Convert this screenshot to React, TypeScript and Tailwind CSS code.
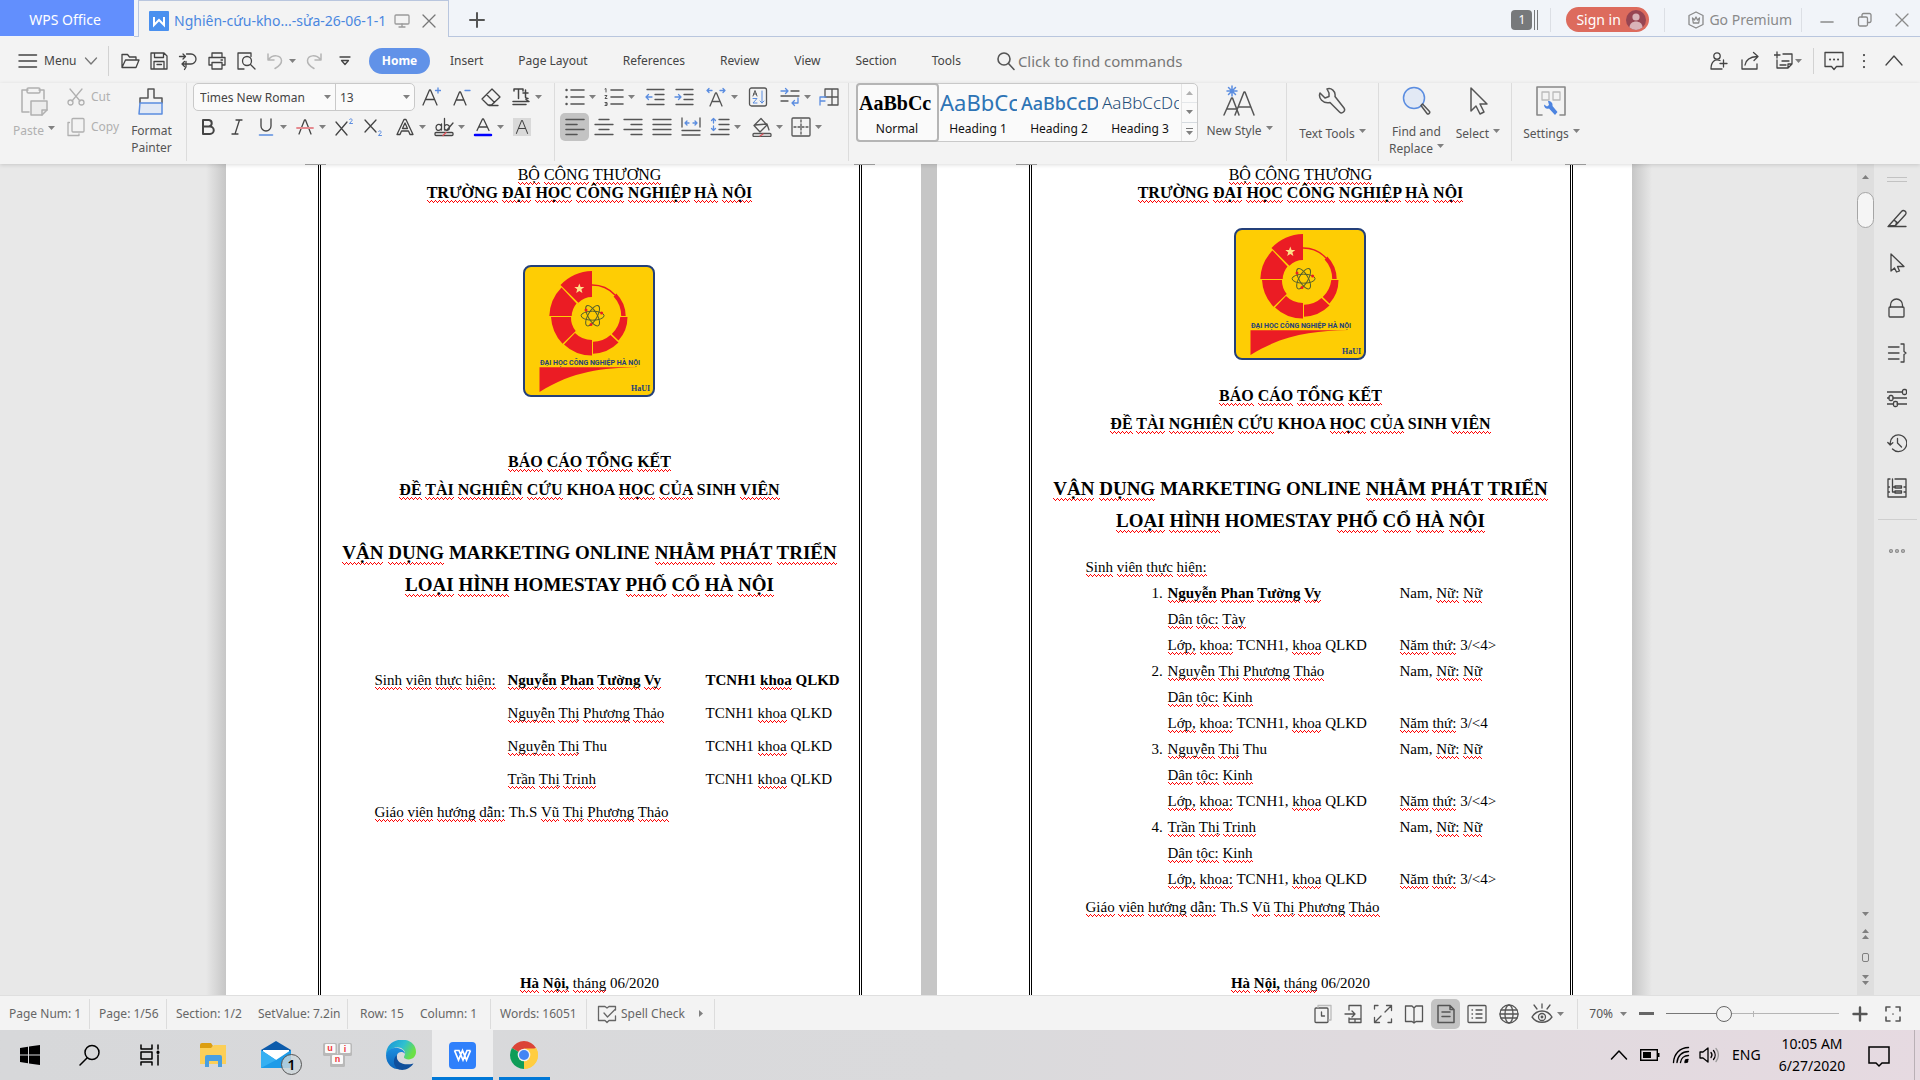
import React from "react";

type Kids = { children?: React.ReactNode };

/* ---------- drawing helpers ---------- */

function Svg({ s = 20, vb = 20, sw = 1.3, children }: Kids & { s?: number; vb?: number; sw?: number }) {
  return (
    <svg width={s} height={s} viewBox={`0 0 ${vb} ${vb}`} fill="none" stroke="currentColor" strokeWidth={sw} strokeLinecap="round" strokeLinejoin="round" className="shrink-0" aria-hidden="true">
      {children}
    </svg>
  );
}

function Caret() {
  return (
    <svg width="7" height="4" viewBox="0 0 7 4" className="shrink-0 fill-[#808080]" aria-hidden="true">
      <path d="M0 0h7L3.500 4z" />
    </svg>
  );
}

function Tool({ label, children }: Kids & { label: string }) {
  return (
    <button type="button" aria-label={label} className="flex h-7 w-[29px] shrink-0 items-center justify-center">
      {children}
    </button>
  );
}

function DropTool({ label, children }: Kids & { label: string }) {
  return (
    <button type="button" aria-label={label} className="flex h-7 w-[39px] shrink-0 items-center">
      <span className="flex w-[29px] justify-center">{children}</span>
      <Caret />
    </button>
  );
}

function Big({ label, second, drop, high, children }: Kids & { label: string; second?: string; drop?: boolean; high?: boolean }) {
  return (
    <button type="button" className="flex flex-col items-center">
      <span className="flex h-9 items-center">{children}</span>
      <span className={high ? "mt-[3px] flex gap-1 leading-[17px]" : second ? "mt-1 flex gap-1 leading-[17px]" : "mt-[6px] flex gap-1 leading-[18px]"}>
        {label}
        {drop && !second && <span className="pt-1"><Caret /></span>}
      </span>
      {second && (
        <span className="flex gap-1 leading-[17px]">
          {second}
          {drop && <span className="pt-1"><Caret /></span>}
        </span>
      )}
    </button>
  );
}

const Sep = () => <div className="mx-[5px] h-[78px] w-px shrink-0 bg-[#dcdcdc]" />;

/* ---------- title bar ---------- */

function TitleBar() {
  return (
    <header className="flex h-[37px] shrink-0 items-stretch bg-[#f1f4f9] text-sm">
      <button type="button" className="mb-px w-[134px] bg-[#628ffd] pt-1 pr-1 text-white">WPS Office</button>
      <div className="w-1 border-b border-[#b9c6de]" />
      <div className="flex w-[311px] items-center border-x border-t border-[#b9c6de] bg-[#f3f3f3] pt-[3px] pl-[10px] text-[#4a87e0]">
        <svg width="20" height="20" viewBox="0 0 20 20" className="shrink-0" aria-hidden="true">
          <rect width="20" height="20" rx="1" fill="#4a90ef" />
          <path d="M5 6v8l5-5 5 5V6" fill="none" stroke="#fff" strokeWidth="2" />
        </svg>
        <span className="ml-[5px] w-[220px] whitespace-nowrap">Nghiên-cứu-kho...-sửa-26-06-1-1</span>
        <span className="text-[#9a9a9a]"><Svg s={16} vb={16}><rect x="1" y="2" width="14" height="9" rx="1" /><path d="M8 11v3M5 14h6" /></Svg></span>
        <button type="button" aria-label="Close tab" className="ml-3 text-[#777]"><Svg s={14} vb={14}><path d="M1 1l12 12M13 1L1 13" /></Svg></button>
      </div>
      <div className="flex flex-1 items-center border-b border-[#b9c6de] pt-[3px] text-[#8a8a8a]">
        <button type="button" aria-label="New tab" className="ml-5 text-[#555]"><Svg s={16} vb={16} sw={2}><path d="M8 1v14M1 8h14" /></Svg></button>
        <div className="flex-1" />
        <div className="flex gap-[2px]">
          <span className="flex h-5 w-[21px] items-center justify-center rounded-sm bg-[#77797b] text-xs text-white">1</span>
          <span className="h-5 w-px bg-[#77797b]" />
          <span className="h-5 w-px bg-[#77797b]" />
        </div>
        <div className="mx-3 h-6 w-px bg-[#dcdfe5]" />
        <button type="button" className="ml-[3px] flex h-[25px] w-[83px] items-center justify-between rounded-full bg-[#dd6b5d] pr-[3px] pl-[10px] text-white">
          Sign in
          <svg width="20" height="20" viewBox="0 0 20 20" aria-hidden="true">
            <circle cx="10" cy="10" r="10" fill="#974552" />
            <circle cx="10" cy="7" r="3.600" fill="#d9b3b8" />
            <path d="M3.500 17.500c0-8 13-8 13 0a10 10 0 0 1-13 0" fill="#d9b3b8" />
          </svg>
        </button>
        <div className="mr-[22px] ml-[15px] h-6 w-px bg-[#dcdfe5]" />
        <button type="button" className="flex items-center gap-1">
          <Svg s={18} vb={18}><path d="M9 1l7 3.500v9L9 17l-7-3.500v-9z" /><path d="M5.500 7l.8 5h5.400l.8-5L10.500 9 9 6 7.500 9z" /></Svg>
          Go Premium
        </button>
        <div className="mr-[18px] ml-[9px] h-6 w-px bg-[#dcdfe5]" />
        <button type="button" aria-label="Minimize" className="w-[14px]"><Svg s={14} vb={14} sw={1.600}><path d="M1 9h12" /></Svg></button>
        <button type="button" aria-label="Restore" className="ml-[23px]"><Svg s={16} vb={16}><rect x="1.500" y="5" width="9" height="9" rx="1.500" /><path d="M5 5V3a1.500 1.500 0 0 1 1.500-1.500h6A1.500 1.500 0 0 1 14 3v6a1.500 1.500 0 0 1-1.500 1.500h-2" /></Svg></button>
        <button type="button" aria-label="Close" className="mr-[11px] ml-[22px]"><Svg s={14} vb={14}><path d="M1 1l12 12M13 1L1 13" /></Svg></button>
      </div>
    </header>
  );
}

/* ---------- menu row ---------- */

const tabs = ["Insert", "Page Layout", "References", "Review", "View", "Section", "Tools"];

function MenuRow() {
  return (
    <nav className="flex h-[46px] shrink-0 items-center pt-px text-[#444]">
      <button type="button" className="flex items-center pl-[18px]">
        <Svg s={20} sw={1.500}><path d="M1 4h17.500M1 10h17.500M1 16h17.500" /></Svg>
        <span className="ml-[6px] w-10 text-left">Menu</span>
        <span className="text-[#777]"><Svg s={14} vb={14}><path d="M1.500 4L7 10l5.500-6" /></Svg></span>
      </button>
      <div className="mr-[6px] ml-[10px] h-[30px] w-px bg-[#d2d2d2]" />
      <Tool label="Open"><Svg><path d="M2 16V3.500h5.500l2 2.500H16v3M2 16.500l3.500-7.500H19l-3 7.500z" /></Svg></Tool>
      <Tool label="Save"><Svg><path d="M2 2h13l3 3v13H2zM5.500 2v4.500h9V2M5 18v-7.500h10V18M8 13.500h4.500" /></Svg></Tool>
      <Tool label="Export"><Svg><path d="M1.500 5.500H7M5 3l2.500 2.500L5 8M8.500 3H13a5 5 0 0 1 0 10H4M6.500 10.500L4 13l2.500 2.500M8 10.500V16l-1.500 2.500" /></Svg></Tool>
      <Tool label="Print"><Svg><path d="M5 6V2h10v4M5 14H2V6.500h16V14h-3M5 11.500h10V18H5zM14 9h1.500" /></Svg></Tool>
      <Tool label="Print preview"><Svg><path d="M8 18H2V2h13v3.500" /><circle cx="11" cy="10" r="4.500" /><path d="M14.500 13.500L19 18" /></Svg></Tool>
      <span className="flex text-[#b5b5b5]">
        <Tool label="Undo"><Svg sw={1.500}><path d="M3 3v6h6M3.500 8.500C8 3 16 4 16.500 9.500c.3 3.500-3 6-6.500 8" /></Svg></Tool>
      </span>
      <Caret />
      <span className="ml-[3px] flex text-[#b5b5b5]">
        <Tool label="Redo"><Svg sw={1.500}><path d="M17 3v6h-6M16.500 8.500C12 3 4 4 3.500 9.500c-.3 3.500 3 6 6.500 8" /></Svg></Tool>
      </span>
      <span className="mr-[10px] ml-[2px] flex"><Tool label="Customize"><Svg s={12} vb={12}><path d="M1 2h10M2.500 5.500L6 9.500l3.500-4z" /></Svg></Tool></span>
      <button type="button" className="h-[26px] w-[61px] rounded-full bg-[#6192e8] font-bold text-white">Home</button>
      <div className="ml-5 flex gap-[35px] pt-px">
        {tabs.map((t) => <button type="button" key={t}>{t}</button>)}
      </div>
      <label className="ml-[35px] flex items-center gap-[2px] text-[#555]">
        <Svg s={20} sw={1.600}><circle cx="8" cy="8" r="6" /><path d="M12.500 12.500L18 18.500" /></Svg>
        <input className="w-[200px] bg-transparent text-[15px] outline-none placeholder:text-[#777]" placeholder="Click to find commands" aria-label="Find commands" />
      </label>
      <div className="flex-1" />
      <div className="flex items-center">
        <button type="button" aria-label="Collaborate" className="mr-3"><Svg><circle cx="9" cy="5" r="3.200" /><path d="M12 9.500c-5-2-9 1-9 8.500h11M15.500 9v7M12 12.500h7" /></Svg></button>
        <button type="button" aria-label="Share" className="mr-[14px]"><Svg><path d="M2 9v9h15v-5M5 14c1-6 5-8 12-8.500M13.500 1.500L18 5.500 14 9.500" /></Svg></button>
        <button type="button" aria-label="Notes" className="mr-[11px] flex items-center gap-px"><Svg><path d="M9 3h9v10l-4 4H3v-8M3 1v6M0 4h6M8 10h7M6 14h6M18 13h-4v4" /></Svg><Caret /></button>
        <div className="h-[26px] w-px bg-[#d2d2d2]" />
        <button type="button" aria-label="Comments" className="ml-[10px]"><Svg><path d="M1 1.500h18v14h-6.500l-2.500 3-2.500-3H1z" /><path d="M6 8.500h.1M10 8.500h.1M14 8.500h.1" strokeWidth="2" /></Svg></button>
        <button type="button" aria-label="More" className="ml-[10px]"><Svg sw={2.200}><path d="M10 4v.1M10 10v.1M10 16v.1" /></Svg></button>
        <button type="button" aria-label="Collapse ribbon" className="mr-4 ml-[10px]"><Svg><path d="M2 14l8-9 8 9" /></Svg></button>
      </div>
    </nav>
  );
}

/* ---------- ribbon ---------- */

const BL = "#5b8de0";

function Clipboard() {
  return (
    <div className="flex pl-[10px]">
      <div className="flex w-[48px] justify-center text-[#b0b0b0]">
        <Big label="Paste" drop high>
          <Svg s={30} vb={30} sw={1.500}><path d="M9 4H3v22h7M20 4h5v9" /><rect x="8" y="2" width="13" height="5" rx="1.500" /><path d="M12 15h16v9l-5 5H12z" fill="#ececec" /><path d="M28 24h-5v5" /></Svg>
        </Big>
      </div>
      <div className="flex w-[66px] flex-col gap-[2px] pl-2 text-[#b0b0b0]">
        <button type="button" className="flex h-7 items-center gap-[5px]"><Svg><path d="M4 2l10 12M16 2L6 14" /><circle cx="4.500" cy="15.500" r="2.500" /><circle cx="15.500" cy="15.500" r="2.500" /></Svg>Cut</button>
        <button type="button" className="flex h-7 items-center gap-[5px]"><Svg><rect x="6" y="1.500" width="12" height="13.500" rx="1" /><path d="M3.500 5.500H2v13h11V17" /></Svg>Copy</button>
      </div>
      <div className="flex w-[57px] justify-center pr-[2px] text-[#555]">
        <Big label="Format" second="Painter" high>
          <Svg s={30} vb={30} sw={1.500}><path d="M4 17v-5h8V3h6v9h8v5" /><path d="M4 17h22v11H3z" stroke={BL} fill="#e2e9f5" /></Svg>
        </Big>
      </div>
    </div>
  );
}

function FontGroup() {
  return (
    <div className="flex w-[362px] flex-col gap-[2px] pl-px text-[#444]">
      <div className="flex items-center">
        <div className="mr-px flex h-7 w-[222px] items-center rounded-[5px] border border-[#c9c9c9] bg-[#fafafa]">
          <input aria-label="Font" defaultValue="Times New Roman" className="w-[130px] bg-transparent pt-px pl-[6px] outline-none" />
          <button type="button" aria-label="Font list" className="flex h-full w-3 items-center border-r border-[#c9c9c9]"><Caret /></button>
          <input aria-label="Font size" defaultValue="13" className="w-[67px] bg-transparent pt-px pl-[4px] outline-none" />
          <button type="button" aria-label="Size list"><Caret /></button>
        </div>
        <div className="flex gap-px">
          <Tool label="Increase font size"><Svg><path d="M2 18L8.500 3h1L16 18M4.500 12.500h9" /><path d="M17 1v5M14.500 3.500h5" stroke={BL} /></Svg></Tool>
          <Tool label="Decrease font size"><Svg><path d="M3 18L8.500 5h1L15 18M5 13h8" /><path d="M14 3.500h5" stroke={BL} /></Svg></Tool>
          <Tool label="Clear formatting"><Svg><path d="M11 2l8 8-8.500 8H7l-6-6zM5.500 7.500l8 8M8 18.500h9" /></Svg></Tool>
          <DropTool label="Change case"><Svg sw={1.500}><path d="M3 4V2h9v2M7.500 2v9.500M12 6h5M14.500 3v7c0 1.500 1 1.500 2.500 1.500M2 14.500h16l-3-2M2 17.500h13" /></Svg></DropTool>
        </div>
      </div>
      <div className="flex items-center">
        <Tool label="Bold"><Svg sw={2}><path d="M5 3h6a3.300 3.300 0 0 1 0 6.500H5zM5 9.500h7a3.700 3.700 0 0 1 0 7.500H5z" /></Svg></Tool>
        <Tool label="Italic"><Svg><path d="M9 3h6M5 17h6M12.500 3L8 17" /></Svg></Tool>
        <DropTool label="Underline"><Svg><path d="M5 2v7a5 5 0 0 0 10 0V2" /><path d="M3.500 18h13" stroke={BL} strokeWidth="1.600" /></Svg></DropTool>
        <DropTool label="Strikethrough"><Svg><path d="M4 17L9.500 3h1L16 17" /><path d="M2 11h16" stroke="#e58a8f" strokeWidth="1.800" /></Svg></DropTool>
        <Tool label="Superscript"><Svg><path d="M2 5l11 13M13 5L2 18" /><path d="M15.500 2.500c1-1.500 3-.5 2.500 1L15.500 6.500H18.500" stroke={BL} strokeWidth="1" /></Svg></Tool>
        <Tool label="Subscript"><Svg><path d="M2 3l11 12M13 3L2 15" /><path d="M15.500 14.500c1-1.500 3-.5 2.500 1L15.500 18.500H18.500" stroke={BL} strokeWidth="1" /></Svg></Tool>
        <div className="w-[3px]" />
        <DropTool label="Text effects"><Svg><path d="M2 17.500L9 2.500h2l7 15h-3l-1.500-3.500h-7L5 17.500zM7.500 11.500h5L10 6z" /></Svg></DropTool>
        <DropTool label="Highlight"><Svg><path d="M7 8.500c-2-2-5-1-5 2s3 4 5 1.500M7.500 7v6M10.500 1.500V13M10.500 9c2-2.500 5-1 5 1.500s-3 4-5 1.500M19 6l-6 7" /><rect x="1" y="15.500" width="18" height="3" rx="1" /><path d="M9 18.500l3-3" stroke="#e0525a" /></Svg></DropTool>
        <DropTool label="Font color"><Svg><path d="M4 13.500L9.500 2h1L16 13.500M6 10h8" /><path d="M2 18h16" stroke="#0000ff" strokeWidth="2.500" /></Svg></DropTool>
        <Tool label="Character shading"><span className="flex h-[18px] w-[18px] items-center justify-center bg-[#d9d9d9]"><Svg s={16}><path d="M3 18L9.500 2h1L17 18M5.500 12h9" /></Svg></span></Tool>
      </div>
    </div>
  );
}

function ParagraphGroup() {
  return (
    <div className="flex w-[283px] flex-col gap-[2px] text-[#555]">
      <div className="flex items-center">
        <DropTool label="Bullets"><Svg sw={1.600}><path d="M6 3h13M6 10h13M6 17h13" /><path d="M1.500 3h.1M1.500 10h.1M1.500 17h.1" strokeWidth="2.400" /></Svg></DropTool>
        <DropTool label="Numbering"><Svg sw={1.600}><path d="M7 3h12M7 10h12M7 17h12" /><path d="M1 2l1-.5V5M1 8.500h2L1 11.500h2M1 15.500h2v3H1M1.500 17H3" strokeWidth="1" /></Svg></DropTool>
        <div className="w-[3px]" />
        <Tool label="Decrease indent"><Svg><path d="M2 2.500h17M10 7.500h9M10 12.500h9M2 17.500h17" /><path d="M7 10H1M3.500 7.500L1 10l2.500 2.500" stroke={BL} /></Svg></Tool>
        <Tool label="Increase indent"><Svg><path d="M2 2.500h17M10 7.500h9M10 12.500h9M2 17.500h17" /><path d="M1 10h6M4.500 7.500L7 10l-2.500 2.500" stroke={BL} /></Svg></Tool>
        <div className="w-[3px]" />
        <DropTool label="Character scale"><Svg><path d="M4 19l5.500-13h1L16 19M6 14.500h8" /><path d="M6 3.500H1M3 1.500L1 3.500l2 2M14 3.500h5M17 1.500l2 2-2 2" stroke={BL} /></Svg></DropTool>
        <div className="w-[3px]" />
        <Tool label="Sort"><Svg><rect x="1.500" y="1" width="17" height="18" rx="2" /><path d="M5 9l2-5.500L9 9M5.500 7h3" strokeWidth="1" /><path d="M5 11.500h4L5 16h4M14 4v12M12 14l2 2 2-2" stroke={BL} strokeWidth="1" /></Svg></Tool>
        <div className="w-[3px]" />
        <DropTool label="Text direction"><Svg><path d="M11 4h8M1 9h18M1 14h7" /><path d="M1 4h7M5.500 1.500L8 4 5.500 6.500M18 11v5h-6M14.500 13.500L12 16l2.500 2.500" stroke={BL} /></Svg></DropTool>
        <Tool label="Grid"><Svg><path d="M6 9V2h13v16H9M13 2v16M6 10h13" /><path d="M1 18v-8h6M1 14h5" stroke={BL} /></Svg></Tool>
      </div>
      <div className="flex items-center">
        <span className="flex rounded-[5px] bg-[#c3c3c3]"><Tool label="Align left"><Svg sw={1.600}><path d="M1 2.500h18M1 7.500h11M1 12.500h18M1 17.500h11" /></Svg></Tool></span>
        <Tool label="Center"><Svg><path d="M5 2.500h10M1 7.500h18M5 12.500h10M1 17.500h18" /></Svg></Tool>
        <Tool label="Align right"><Svg><path d="M1 2.500h18M8 7.500h11M1 12.500h18M8 17.500h11" /></Svg></Tool>
        <Tool label="Justify"><Svg><path d="M1 2.500h18M1 7.500h18M1 12.500h18M1 17.500h18" /></Svg></Tool>
        <Tool label="Distribute"><Svg><path d="M1 1v9M19 1v9M1 13.500h18M1 18h18" /><path d="M4 6h4M6 4L4 6l2 2M16 6h-4M14 4l2 2-2 2" stroke={BL} /></Svg></Tool>
        <DropTool label="Line spacing"><Svg><path d="M9 2.500h10M9 7.500h10M9 12.500h10M1 17.500h18" /><path d="M3.500 6V1.500M1.500 3.500l2-2 2 2M3.500 9v4.500M1.500 11.500l2 2 2-2" stroke={BL} /></Svg></DropTool>
        <div className="w-[3px]" />
        <DropTool label="Shading"><Svg><path d="M9 1.500l-7 7L8 15l7-7zM3 8l12-1 2 6" /><rect x="1" y="16.500" width="18" height="3" rx="1" /><path d="M8 19l3-2" stroke="#e0525a" /></Svg></DropTool>
        <DropTool label="Borders"><Svg><rect x="1" y="1" width="18" height="18" rx="1" /><path d="M10 3v14M3 10h14" strokeDasharray="2 2" /></Svg></DropTool>
      </div>
    </div>
  );
}

function StyleCell({ name, children }: Kids & { name: string }) {
  return (
    <button type="button" className="flex w-[81px] flex-col overflow-hidden pl-[2px]">
      <span className="flex h-9 w-[77px] items-center overflow-hidden pt-[2px] whitespace-nowrap">{children}</span>
      <span className="w-full pr-[3px] text-center leading-[18px] text-[#111]">{name}</span>
    </button>
  );
}

function Styles() {
  return (
    <div className="ml-[2px] flex h-[59px] w-[342px] rounded-[5px] border border-[#c9c9c9] bg-[#fafafa]">
      <div className="flex h-[57px] rounded-[3px] outline-2 -outline-offset-1 outline-[#b5b5b5]">
        <StyleCell name="Normal"><span className="font-['Liberation_Serif'] text-xl font-bold text-black">AaBbCc</span></StyleCell>
      </div>
      <StyleCell name="Heading 1"><span className="text-[22px] text-[#2e74b5]">AaBbCc</span></StyleCell>
      <StyleCell name="Heading 2"><span className="text-lg font-medium text-[#2e74b5]">AaBbCcD</span></StyleCell>
      <StyleCell name="Heading 3"><span className="text-[17px] font-light text-[#1f4d78]">AaBbCcDd</span></StyleCell>
      <div className="flex flex-1 flex-col divide-y divide-[#d6dbe0] border-l border-[#e4e4e4]">
        <button type="button" aria-label="Previous styles" className="flex flex-1 items-center justify-center opacity-60"><span className="rotate-180"><Caret /></span></button>
        <button type="button" aria-label="Next styles" className="flex flex-1 items-center justify-center"><Caret /></button>
        <button type="button" aria-label="All styles" className="flex flex-1 flex-col items-center justify-center gap-[2px]"><span className="h-px w-[7px] bg-[#777]" /><Caret /></button>
      </div>
    </div>
  );
}

function Ribbon() {
  return (
    <div className="relative z-10 flex h-[81px] shrink-0 bg-[#f3f3f3] shadow-[0_1px_4px_rgba(0,0,0,0.14)]">
      <Clipboard />
      <Sep />
      <FontGroup />
      <div className="h-[78px] w-px shrink-0 bg-[#dcdcdc]" />
      <div className="w-[5px]" />
      <ParagraphGroup />
      <Sep />
      <Styles />
      <div className="flex w-[83px] justify-center text-[#555]">
        <Big label="New Style" drop high>
          <Svg s={32} vb={32} sw={1.500}><path d="M1 30L8.500 13h1L16 30M4 24h10M12 30L21 7h1l9 23M15.500 22h12" /><path d="M9 1v10M4 6h10M5.500 2.500l7 7M12.500 2.500l-7 7" stroke={BL} /></Svg>
        </Big>
      </div>
      <Sep />
      <div className="flex w-[81px] justify-center text-[#555]">
        <Big label="Text Tools" drop>
          <Svg s={28} vb={28} sw={1.500}><path d="M9 2c4-1.500 9 2 8 7.500l9 11.500c2 3-2 6.500-4.500 4L12 15.500C5 17 0 11 2 6l5 5 4-1.500V6z" /></Svg>
        </Big>
      </div>
      <Sep />
      <div className="flex w-[122px] justify-between pr-[6px] pl-[5px] text-[#555]">
        <Big label="Find and" second="Replace" drop>
          <Svg s={30} vb={30} sw={1.500}><circle cx="13" cy="12" r="10.500" stroke={BL} fill="#e2e9f5" /><path d="M20 19.500l1.500-1.500 7 7.500c1 1.500-1.500 3.500-2.500 2z" /></Svg>
        </Big>
        <Big label="Select" drop>
          <Svg s={30} vb={30} sw={1.500}><path d="M8 2v23l5-5 4 8 4-2-4-8h7z" /></Svg>
        </Big>
      </div>
      <Sep />
      <div className="flex w-[69px] justify-center text-[#555]">
        <Big label="Settings" drop>
          <Svg s={30} vb={30}><path d="M6 29H1V1h28v28h-5" stroke="#888" strokeWidth="1.600" /><path d="M6 6h7v8H6zM17 6h7v8h-7z" stroke="#bbb" /><path d="M12 15c3 0 5 2 4.500 5l5 6-2.500 3-6-6.500c-3 1-5-1-5-4l3 2 2-1.500z" fill="#4d84e0" stroke="none" /></Svg>
        </Big>
      </div>
    </div>
  );
}

/* ---------- document ---------- */

/* Words marked with "~" carry the spelling underline: a 4px zigzag, three rows high. */
function T({ children }: { children: string }) {
  return (
    <>
      {children.split(" ").map((w, i) => (
        <React.Fragment key={i}>
          {i > 0 && " "}
          {w.startsWith("~") ? (
            <span className="bg-[linear-gradient(90deg,#f00_1px,transparent_1px),linear-gradient(90deg,#f00_1px,transparent_1px),linear-gradient(90deg,#f00_1px,transparent_1px)] bg-[size:4px_1px,2px_1px,4px_1px] bg-[position:0_calc(100%-2px),1px_calc(100%-1px),2px_100%] bg-repeat-x pb-[2px]">{w.slice(1)}</span>
          ) : w}
        </React.Fragment>
      ))}
    </>
  );
}

function Crest() {
  const red = "#eb1c24";
  return (
    <svg width="132" height="132" viewBox="0 0 132 132" className="mx-auto block" role="img" aria-label="HaUI">
      <rect x="1" y="1" width="130" height="130" rx="7" fill="#fecd04" stroke="#24407a" strokeWidth="2" />
      <g fill={red}>
        <path d="M69 6A45 45 0 0 0 37.500 20L55.400 37.700A19 19 0 0 1 69 32Z" />
        <path d="M38.500 22.500A43 43 0 0 0 26.300 51H48.700A21 21 0 0 1 53.500 38.500Z" />
        <path d="M28 52A42 42 0 0 0 39.500 78.700L52.700 66A21 21 0 0 1 48 52Z" />
        <path d="M41 79.500A40 40 0 0 0 69 90.500V75A24 24 0 0 1 52 68Z" />
        <path d="M70 88.700A38 38 0 0 0 95.500 77.500L87.500 70A26 26 0 0 1 70 76.700Z" />
        <path d="M104.500 52A35 35 0 0 1 95.500 75.500L88.800 69A28 28 0 0 0 97.300 52Z" />
        <path d="M102.700 51A33 33 0 0 0 93.300 28.500L90.600 31.500A29 29 0 0 1 98.200 51Z" />
        <path d="M16.500 102.300H114C80 103 50 106 16.500 127Z" />
      </g>
      <path d="M69 20A31 31 0 0 1 92 30" fill="none" stroke={red} strokeWidth="1.400" />
      <path d="M56.300 18.500l1.300 3.400 3.700.1-2.900 2.300 1 3.600-3.100-2-3.100 2 1-3.600-2.900-2.300 3.700-.1z" fill="#fde08a" />
      <g fill="none" stroke="#56602c" strokeWidth="1">
        <ellipse cx="69.600" cy="50.700" rx="11.500" ry="4.500" />
        <ellipse cx="69.600" cy="50.700" rx="11.500" ry="4.500" transform="rotate(60 69.600 50.700)" />
        <ellipse cx="69.600" cy="50.700" rx="11.500" ry="4.500" transform="rotate(120 69.600 50.700)" />
      </g>
      <g fill={red}><circle cx="63" cy="45" r="1.500" /><circle cx="78.600" cy="48" r="1.500" /><circle cx="68" cy="59.500" r="1.500" /></g>
      <text x="67" y="100" textAnchor="middle" className="fill-[#24407a] font-['Roboto'] text-[7px] font-bold">ĐẠI HỌC CÔNG NGHIỆP HÀ NỘI</text>
      <text x="108" y="126" className="fill-[#24407a] font-['Liberation_Serif'] text-[8px] font-bold">HaUI</text>
    </svg>
  );
}

function Page({ children }: Kids) {
  return (
    <article className="w-[695px] shrink-0 bg-white pl-[92px]">
      <div className="relative h-full w-[544px] border-x-3 border-double border-black pt-[2px] font-['Liberation_Serif',serif] text-[15px] leading-[26px] text-black">
        <span className="absolute top-0 -left-4 h-px w-[21px] bg-[#a8a8a8]" />
        <span className="absolute top-0 -right-4 h-px w-[21px] bg-[#a8a8a8]" />
        <div className="text-center text-base leading-[18px]">
          <p><T>~BỘ ~CÔNG ~THƯƠNG</T></p>
          <p className="font-bold"><T>~TRƯỜNG ~ĐẠI ~HỌC ~CÔNG ~NGHIỆP ~HÀ ~NỘI</T></p>
        </div>
        {children}
      </div>
    </article>
  );
}

function Report() {
  return (
    <div className="text-center text-base leading-7 font-bold">
      <p><T>~BÁO ~CÁO ~TỔNG ~KẾT</T></p>
      <p><T>~ĐỀ ~TÀI ~NGHIÊN ~CỨU KHOA ~HỌC ~CỦA SINH ~VIÊN</T></p>
    </div>
  );
}

function Topic() {
  return (
    <div className="text-center text-[19px] leading-8 font-bold">
      <p><T>~VẬN ~DỤNG MARKETING ONLINE ~NHẰM ~PHÁT ~TRIỂN</T></p>
      <p><T>~LOẠI ~HÌNH HOMESTAY ~PHỐ ~CỔ ~HÀ ~NỘI</T></p>
    </div>
  );
}

const authors = ["~Nguyễn ~Phan ~Tường ~Vy", "~Nguyễn ~Thị ~Phương ~Thảo", "~Nguyễn ~Thị Thu", "~Trần ~Thị ~Trinh"];
const ethnic = ["~Tày", "~Kinh", "~Kinh", "~Kinh"];
const years = ["3/<4>", "3/<4", "3/<4>", "3/<4>"];

function Doc() {
  return (
    <main className="flex min-w-0 flex-1 justify-center overflow-hidden bg-[#e8e8e8]">
      <div className="w-5 shrink-0 bg-linear-to-r from-[#e8e8e8] to-[#c6c6c6]" />
      <Page>
        <div className="pt-[63px] pr-[2px] pb-[51px]"><Crest /></div>
        <Report />
        <div className="pt-[33px]"><Topic /></div>
        <table className="mt-[63px] ml-[54px] leading-[33px]">
          <tbody>
            {authors.map((a, i) => (
              <tr key={a} className={i === 0 ? "font-bold" : ""}>
                <td className="w-[133px] p-0 font-normal">{i === 0 && <T>~Sinh ~viên ~thực ~hiện:</T>}</td>
                <td className="w-[198px] p-0"><T>{a}</T></td>
                <td className="p-0 whitespace-nowrap"><T>TCNH1 ~khoa QLKD</T></td>
              </tr>
            ))}
          </tbody>
        </table>
        <p className="ml-[54px] leading-[33px]"><T>~Giáo ~viên ~hướng ~dẫn: Th.S ~Vũ ~Thị ~Phương ~Thảo</T></p>
        <p className="mt-[141px] text-center"><b><T>~Hà ~Nội,</T></b> <T>~tháng 06/2020</T></p>
      </Page>
      <div className="w-4 shrink-0 bg-[#c6c6c6]" />
      <Page>
        <div className="pt-[26px] pr-[2px] pb-[22px]"><Crest /></div>
        <Report />
        <div className="pt-[35px]"><Topic /></div>
        <p className="mt-[17px] ml-[54px]"><T>~Sinh ~viên ~thực ~hiện:</T></p>
        <ol className="ml-[120px] flex flex-col">
          {authors.map((a, i) => (
            <li key={a} className="grid grid-cols-[16px_232px_1fr]">
              <span>{i + 1}.</span>
              <span className={i === 0 ? "font-bold" : ""}><T>{a}</T></span>
              <span><T>Nam, ~Nữ: ~Nữ</T></span>
              <span className="col-span-2 col-start-2"><T>{`~Dân ~tộc: ${ethnic[i]}`}</T></span>
              <span className="col-start-2"><T>~Lớp, ~khoa: TCNH1, ~khoa QLKD</T></span>
              <span><T>{`~Năm ~thứ: ${years[i]}`}</T></span>
            </li>
          ))}
        </ol>
        <p className="mt-[2px] ml-[54px]"><T>~Giáo ~viên ~hướng ~dẫn: Th.S ~Vũ ~Thị ~Phương ~Thảo</T></p>
        <p className="mt-[50px] text-center"><b><T>~Hà ~Nội,</T></b> <T>~tháng 06/2020</T></p>
      </Page>
      <div className="w-5 shrink-0 bg-linear-to-r from-[#c6c6c6] to-[#e8e8e8]" />
    </main>
  );
}

function ScrollBar() {
  return (
    <div className="flex w-[17px] shrink-0 flex-col items-center bg-[#dedede] pt-[11px]">
      <button type="button" aria-label="Scroll up" className="rotate-180"><Caret /></button>
      <div className="mt-[13px] h-9 w-full rounded-full border border-[#a5a5a5] bg-[#f5f5f5]" />
      <div className="flex-1" />
      <button type="button" aria-label="Scroll down"><Caret /></button>
      <button type="button" aria-label="Previous page" className="mt-[13px] flex rotate-180 flex-col gap-[2px]"><Caret /><Caret /></button>
      <button type="button" aria-label="Browse object" className="mt-[14px] h-[9px] w-[7px] rounded-[2px] border border-[#808080]" />
      <button type="button" aria-label="Next page" className="mt-[13px] mb-[10px] flex flex-col gap-[2px]"><Caret /><Caret /></button>
    </div>
  );
}

function SideBar() {
  return (
    <aside className="flex w-[46px] shrink-0 flex-col items-center bg-[#e8e8e8] pt-[13px] text-[#444]">
      <div className="h-[5px] w-5 border-y border-[#c2c2c2]" />
      <div className="mt-[26px] flex flex-col gap-[25px]">
        <button type="button" aria-label="Style pen"><Svg><path d="M1 18.500h18M1.500 18L14.500 3.500c2-2.500 6 .5 4 3L8.500 17.500zM7 12l4 3M7 12.500c3 1 3 3 1 5.500" /></Svg></button>
        <button type="button" aria-label="Select"><Svg><path d="M4 1v17l3.500-3 2 4 3-1-2-4.500H17z" /></Svg></button>
        <button type="button" aria-label="Restrict"><Svg><rect x="2" y="9" width="15" height="10" rx="1" /><path d="M3.500 9V7a6 6 0 0 1 12 0v2" /></Svg></button>
        <button type="button" aria-label="Outline"><Svg><path d="M1.500 4H12M1.500 10H12M1.500 16H12M14 1h3v7.500l2 1.500-2 1.500V19h-3" /></Svg></button>
        <button type="button" aria-label="Adjust"><Svg><path d="M0 4h15M0 10h2M6 10h14M0 16h6M10 16h10" /><rect x="15.500" y="1.500" width="4" height="5" rx="1.500" /><rect x="2" y="7.500" width="4" height="5" rx="1.500" /><rect x="6.500" y="13.500" width="4" height="5" rx="1.500" /></Svg></button>
        <button type="button" aria-label="History"><Svg><path d="M3.200 11A8.300 8.300 0 1 1 5.500 16M.8 9.500L3.200 12l2.600-2.300M10.500 5.500V10l4 4" /></Svg></button>
        <button type="button" aria-label="Structure"><Svg><path d="M3 1H1v18h18V1H8M5.500 1v13h2.500M5.500 9H8M1 9h1.500M1 14h1.500M17 9h2M17 14h2" /><path d="M8 8h6.500v2H8zM8 13h6.500v2H8z" /></Svg></button>
      </div>
      <div className="mt-[21px] h-px w-[39px] bg-[#cfcfcf]" />
      <button type="button" aria-label="More panels" className="mt-[21px] text-[#888]"><Svg><circle cx="4" cy="10" r="1.400" /><circle cx="10" cy="10" r="1.400" /><circle cx="16" cy="10" r="1.400" /></Svg></button>
    </aside>
  );
}

/* ---------- status bar ---------- */

const SSep = () => <div className="h-[30px] w-px bg-[#dcdcdc]" />;

function StatusBar() {
  return (
    <footer className="flex h-[35px] shrink-0 items-center border-t border-[#dfdfdf] pt-px text-[#666]">
      <span className="w-[89px] pl-[9px]">Page Num: 1</span>
      <SSep />
      <span className="w-[76px] pl-[9px]">Page: 1/56</span>
      <SSep />
      <span className="w-[91px] pl-[9px]">Section: 1/2</span>
      <span className="w-[89px]">SetValue: 7.2in</span>
      <SSep />
      <span className="w-[72px] pl-3">Row: 15</span>
      <span className="w-[70px]">Column: 1</span>
      <SSep />
      <span className="w-[95px] pl-[9px]">Words: 16051</span>
      <SSep />
      <button type="button" className="flex w-[127px] items-center pl-[10px]">
        <Svg><path d="M18.500 12v4.500H12l-2 2-2-2H1.500v-14H8l2 1.500 2-1.500h6.500V6M7 9l3.500 4L18 5.500" /></Svg>
        <span className="ml-1">Spell Check</span>
        <svg width="4" height="7" viewBox="0 0 4 7" className="ml-[14px] fill-[#808080]" aria-hidden="true"><path d="M0 0v7l4-3.500z" /></svg>
      </button>
      <SSep />
      <div className="flex-1" />
      <div className="flex items-center text-[#555]">
        <button type="button" aria-label="Clock view" className="mr-[11px]"><Svg><rect x="2" y="4" width="13" height="14.500" rx="1" /><path d="M5 3.500V1.500h13V16h-2" stroke="#bbb" /><path d="M8.500 8v4h3" /></Svg></button>
        <button type="button" aria-label="Mobile view" className="mr-[9px]"><Svg><path d="M5 6V1.500h12v17H5V14M1 10h10M8 7l3 3-3 3M5 15h12M11 15v3" /></Svg></button>
        <button type="button" aria-label="Full screen" className="mr-[11px]"><Svg><path d="M1.500 5V1.500H5M15 18.500h3.500V15M12 8l6.500-6.500M13.500 1.500h5v5M8 12l-6.500 6.500M1.500 13.500v5h5" /></Svg></button>
        <button type="button" aria-label="Reading view" className="mr-[7px]"><Svg><path d="M10 4L8 2H1.500v15.500H8l2 1.500 2-1.500h6.500V2H12zM10 4v14.500" /></Svg></button>
        <button type="button" aria-label="Print layout" className="mr-[7px] flex h-[30px] w-[29px] items-center justify-center rounded-[5px] bg-[#c3c3c3]"><Svg sw={1.500}><path d="M2 1.500h12l4 4v13H2zM14 1.500v4h4M6 8h8M6 12.500h8" /></Svg></button>
        <button type="button" aria-label="Outline view" className="mr-3"><Svg><rect x="1" y="1.500" width="18" height="17" rx="1" /><path d="M9 6h6M9 10h6M9 14h6M5 6h.5M5 10h.5M5 14h.5" /></Svg></button>
        <button type="button" aria-label="Web layout" className="mr-3"><Svg><circle cx="10" cy="10" r="9" /><ellipse cx="10" cy="10" rx="4" ry="9" /><path d="M2 6h16M1 10h18M2 14h16" /></Svg></button>
        <button type="button" aria-label="Eye protection" className="mr-[13px] flex items-center gap-1"><Svg s={22} vb={22}><path d="M1 14c5-8 15-8 20 0-5 7-15 7-20 0z" /><circle cx="11" cy="14" r="3.500" /><circle cx="11" cy="14" r=".8" /><path d="M11 1v4M3 2l3 4M19 2l-3 4" /></Svg><Caret /></button>
        <SSep />
        <button type="button" className="mr-3 ml-[11px] flex items-center gap-[7px]">70% <Caret /></button>
        <button type="button" aria-label="Zoom out" className="h-[3px] w-[15px] bg-[#666]" />
        <div className="relative mr-[13px] ml-3 flex w-[173px] items-center">
          <input type="range" aria-label="Zoom" defaultValue={32} className="h-4 w-full appearance-none bg-[linear-gradient(90deg,#777_32%,#b5b5b5_32%)] bg-[length:100%_1px] bg-center bg-no-repeat [&::-webkit-slider-thumb]:h-4 [&::-webkit-slider-thumb]:w-4 [&::-webkit-slider-thumb]:appearance-none [&::-webkit-slider-thumb]:rounded-full [&::-webkit-slider-thumb]:border [&::-webkit-slider-thumb]:border-[#666] [&::-webkit-slider-thumb]:bg-[#f3f3f3]" />
          <span className="pointer-events-none absolute left-1/2 h-[6px] w-px bg-[#b5b5b5]" />
        </div>
        <button type="button" aria-label="Zoom in"><Svg s={16} vb={16} sw={2.400}><path d="M8 1.500v13M1.500 8h13" /></Svg></button>
        <button type="button" aria-label="Fit" className="mr-[18px] ml-4"><Svg s={18} vb={18} sw={1.600}><path d="M2 6V2h4M12 2h4v4M16 12v4h-4M6 16H2v-4M9 9v.1" /></Svg></button>
      </div>
    </footer>
  );
}

/* ---------- task bar ---------- */

function TaskBar() {
  return (
    <footer className="flex h-[50px] shrink-0 items-stretch bg-linear-to-r from-[#d7d8da] via-[#dadadc] to-[#e6dae1] text-sm text-black">
      <button type="button" aria-label="Start" className="flex w-[60px] items-center justify-center">
        <svg width="20" height="20" viewBox="0 0 20 20" aria-hidden="true"><path d="M0 3l8-1.200V9.500H0zM9 1.600L20 0v9.500H9zM0 10.500h8v7.700L0 17zM9 10.500h11V20L9 18.400z" /></svg>
      </button>
      <button type="button" aria-label="Search" className="flex w-[60px] items-center justify-center"><Svg s={22} vb={22} sw={1.500}><circle cx="13" cy="8.500" r="7" /><path d="M8 14l-7 7" /></Svg></button>
      <button type="button" aria-label="Task view" className="flex w-[60px] items-center justify-center"><Svg s={22} vb={22} sw={1.500}><path d="M2 5V1M2 5h11V1M2 8h11v7H2zM2 21v-3h11v3M19 1v4M19 11v10" /><path d="M19 8v.5" strokeWidth="3" /></Svg></button>
      <button type="button" aria-label="File Explorer" className="flex w-[66px] items-center justify-center">
        <svg width="28" height="26" viewBox="0 0 28 26" aria-hidden="true"><path d="M1 3a2 2 0 0 1 2-2h9l2 3-2 3H1z" fill="#dc9e11" /><path d="M1 6h11l3-3h12v19H1z" fill="#fccf58" /><path d="M6 25V15a2 2 0 0 1 2-2h13a2 2 0 0 1 2 2v10h-4v-6h-9v6z" fill="#4a9fe0" /></svg>
      </button>
      <button type="button" aria-label="Mail, 1 new" className="relative flex w-[60px] items-center justify-center pb-px">
        <svg width="32" height="29" viewBox="0 0 32 29" aria-hidden="true"><path d="M1 10L16 1l15 9v5H1z" fill="#0d5cab" /><path d="M3 10h26v5L16 23 3 15z" fill="#fff" /><path d="M1 10l15 10L31 10v18H1z" fill="#1d9be8" /><path d="M1 10l15 10L1 28z" fill="#36b0f2" /></svg>
        <span className="absolute top-6 left-[35px] flex h-[21px] w-[21px] items-center justify-center rounded-full border border-[#555] bg-[#cdd6dacc] font-semibold">1</span>
      </button>
      <button type="button" aria-label="UniKey" className="flex w-[64px] items-center justify-center">
        <svg width="30" height="24" viewBox="0 0 30 24" className="font-['Liberation_Sans'] text-[9px] font-bold" aria-hidden="true">
          <g fill="#b9b9b9"><rect x="0" y="0" width="14" height="13" rx="1.500" /><rect x="15" y="0" width="14" height="13" rx="1.500" /><rect x="7" y="11" width="15" height="13" rx="1.500" /></g>
          <g fill="#fafafa"><rect x="2" y="1" width="10.500" height="9" rx="1" /><rect x="17" y="1" width="10.500" height="9" rx="1" /><rect x="9" y="12" width="11" height="9" rx="1" /></g>
          <g fill="#f0383c" textAnchor="middle"><text x="7" y="8">u</text><text x="22" y="9">i</text><text x="14.500" y="19">n</text></g>
        </svg>
      </button>
      <button type="button" aria-label="Edge" className="flex w-[61px] items-center justify-center">
        <svg width="30" height="30" viewBox="0 0 30 30" aria-hidden="true">
          <defs>
            <linearGradient id="edgeTop" x1="0" y1="0" x2="1" y2="0.400"><stop offset="0.200" stopColor="#1f9fd6" /><stop offset="0.600" stopColor="#2fc0d0" /><stop offset="1" stopColor="#6be046" /></linearGradient>
            <linearGradient id="edgeLeft" x1="0" y1="0" x2="0" y2="1"><stop offset="0" stopColor="#1b8fe0" /><stop offset="1" stopColor="#0c63b8" /></linearGradient>
          </defs>
          <path d="M0 15C0-5 30-5 30 12c0 6-6 9-11 6.500-2-1-.5-2.500 0-4.500C20 10 13 5 7 8.500 3 10.500 1 13 0 15z" fill="url(#edgeTop)" />
          <path d="M0 15C1 10 7 7 12 8c4 .8 7 3.500 7 6-2-3-7-2.500-8 1-1.500 5 2 11 8 13-8 4-19-1-19-13z" fill="url(#edgeLeft)" />
          <path d="M11 15c-1.500 6 5 11.500 16.500 8.500C24 28.500 18.500 31 13 29.500 6 26 7 18 11 15z" fill="#0f4f9c" />
        </svg>
      </button>
      <button type="button" aria-label="WPS Writer" className="ml-px flex w-[61px] items-center justify-center border-b-[3px] border-[#0078d7] bg-[#eeeeef] pt-[3px]">
        <svg width="27" height="27" viewBox="0 0 27 27" aria-hidden="true"><rect width="27" height="27" rx="4" fill="#2f80fb" /><path d="M5.500 8.500H10l4 9.500 4-9.500h3.500M5.500 8.500L9.500 18l4-9.500 4 9.500 4-9.500" fill="none" stroke="#fff" strokeWidth="1.700" /></svg>
      </button>
      <button type="button" aria-label="Chrome" className="ml-[6px] flex w-[51px] items-center justify-center border-b-[3px] border-[#0078d7] pt-[2px] pr-[2px]">
        <svg width="28" height="28" viewBox="0 0 28 28" aria-hidden="true">
          <path d="M14 14L1.900 7a14 14 0 0 1 24.200 0z" fill="#db4437" />
          <path d="M14 14L26.100 7A14 14 0 0 1 14 28z" fill="#ffcd40" />
          <path d="M14 14v14A14 14 0 0 1 1.900 7z" fill="#0f9d58" />
          <path d="M14 7.500h12.400A14 14 0 0 1 14 28l5.600-10.500z" fill="#ffcd40" />
          <circle cx="14" cy="14" r="6.300" fill="#f1f1f1" /><circle cx="14" cy="14" r="5" fill="#4285f4" />
        </svg>
      </button>
      <div className="flex-1" />
      <div className="flex items-center">
        <button type="button" aria-label="Hidden icons" className="mr-3"><Svg s={18} vb={18} sw={1.500}><path d="M1.500 13L9 5l7.500 8" /></Svg></button>
        <svg width="20" height="12" viewBox="0 0 20 12" aria-label="Battery" role="img"><path d="M.7.700h16.600v10.600H.7z" fill="none" stroke="#000" strokeWidth="1.400" /><path d="M3 3h8v6H3zM18 4h1.500v4H18z" /></svg>
        <span className="ml-3"><Svg s={18} vb={18} sw={1.400}><path d="M1.500 16.500C2 8 8 1.500 16.500 1.500M5 16.500C5.500 10 10 5.500 16.500 5.500M8.500 16.500c.5-4 3.500-7 8-7" /><path d="M13 16.500c.3-1.600 1.500-2.800 3-3" /><circle cx="14.500" cy="15" r="1.200" fill="#000" /></Svg></span>
        <span className="ml-[9px]"><Svg s={20}><path d="M1 7v6h3l5 4V3L4 7zM12 7.500a4 4 0 0 1 0 5M14.500 5.500a7 7 0 0 1 0 9" /><path d="M17 3.500a10 10 0 0 1 0 13" stroke="#999" /></Svg></span>
        <span className="ml-[13px] w-[30px]">ENG</span>
        <div className="ml-4 w-[68px] text-center leading-[22px]"><p>10:05 AM</p><p>6/27/2020</p></div>
        <button type="button" aria-label="Notifications" className="mr-[24px] ml-[22px] pt-1"><Svg s={22} vb={22} sw={1.500}><path d="M1 1h20v16h-7l-3 3-3-3H1z" strokeLinejoin="miter" /></Svg></button>
      </div>
      <div className="mr-[5px] w-px bg-[#b9b0b5]" />
    </footer>
  );
}

export default function App() {
  return (
    <div className="flex h-screen flex-col overflow-hidden bg-[#f3f3f3] font-['Noto_Sans',sans-serif] text-xs">
      <TitleBar />
      <MenuRow />
      <Ribbon />
      <div className="flex min-h-0 flex-1">
        <Doc />
        <ScrollBar />
        <SideBar />
      </div>
      <StatusBar />
      <TaskBar />
    </div>
  );
}
